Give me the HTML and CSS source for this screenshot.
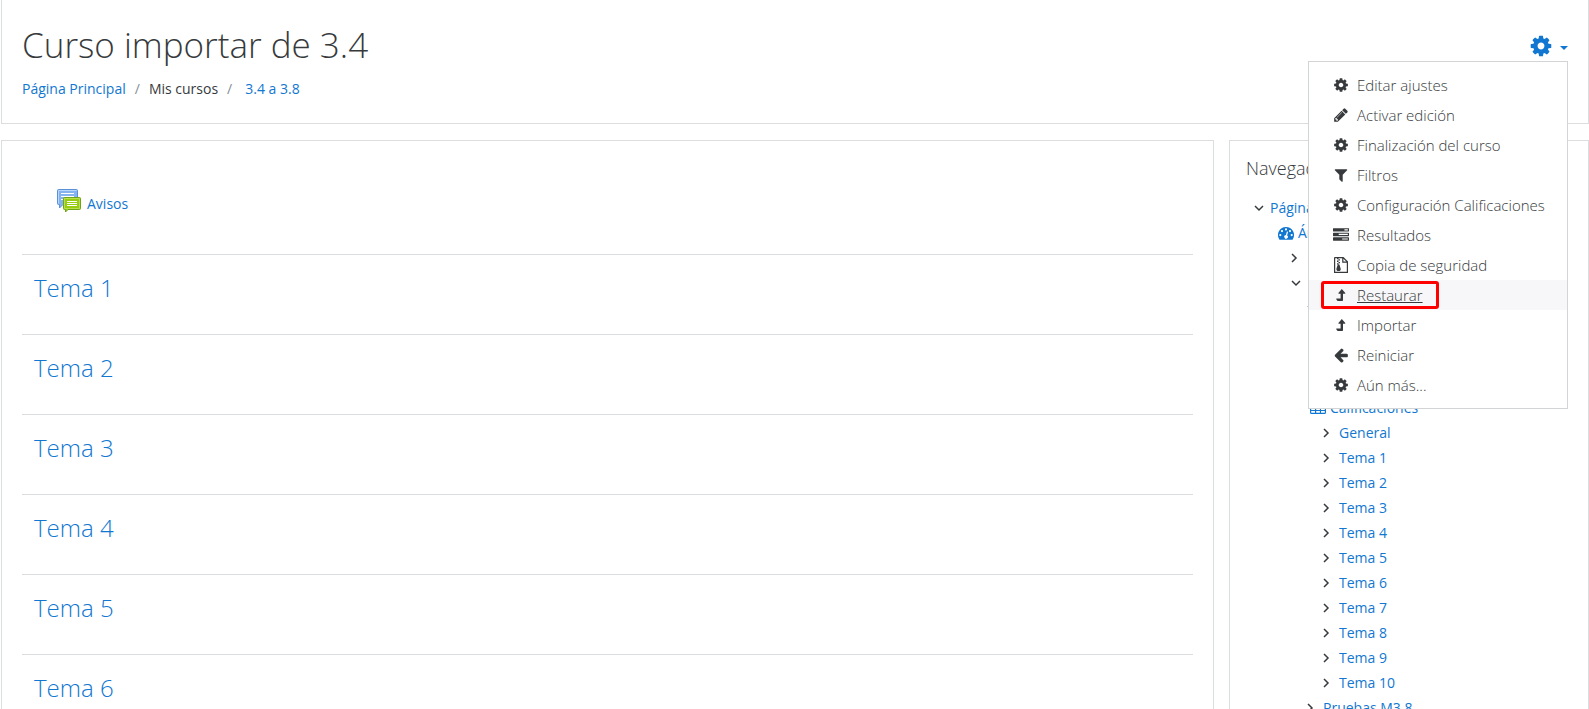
FILE: index.html
```html
<!DOCTYPE html>
<html lang="es">
<head>
    <meta charset="UTF-8">
    <meta name="viewport" content="width=device-width, initial-scale=1.0">
    <link rel="stylesheet" href="styles.css">
    <title>Curso importar de 3.4</title>
</head>
<body>

    <!-- Icons shared by the menu and the navigation tree -->
    <svg class="sprite" aria-hidden="true">
        <symbol id="i-cog" viewBox="0 0 1792 1792"><path d="M1152 896q0-106-75-181t-181-75-181 75-75 181 75 181 181 75 181-75 75-181zm512-109v222q0 12-8 23t-20 13l-185 28q-19 54-39 91 35 50 107 138 10 12 10 25t-9 23q-27 37-99 108t-94 71q-12 0-26-9l-138-108q-44 23-91 38-16 136-29 186-7 28-36 28h-222q-14 0-24.5-8.5t-11.5-21.5l-28-184q-49-16-90-37l-141 107q-10 9-25 9-14 0-25-11-126-114-165-168-7-10-7-23 0-12 8-23 15-21 51-66.5t54-70.5q-27-50-41-99l-183-27q-13-2-21-12.5t-8-23.5v-222q0-12 8-23t19-13l186-28q14-46 39-92-40-57-107-138-10-12-10-24 0-10 9-23 26-36 98.5-107.5t94.5-71.5q13 0 26 10l138 107q44-23 91-38 16-136 29-186 7-28 36-28h222q14 0 24.5 8.5t11.5 21.5l28 184q49 16 90 37l142-107q9-9 24-9 13 0 25 10 129 119 165 170 7 8 7 22 0 12-8 23-15 21-51 66.5t-54 70.5q26 50 41 98l183 28q13 2 21 12.5t8 23.5z"/></symbol>
        <symbol id="i-pencil" viewBox="0 0 1792 1792"><path d="M491 1536l91-91-235-235-91 91v107h128v128h107zm523-928q0-22-22-22-10 0-17 7l-542 542q-7 7-7 17 0 22 22 22 10 0 17-7l542-542q7-7 7-17zm-54-192l416 416-832 832h-416v-416zm683 96q0 53-37 90l-166 166-416-416 166-165q36-38 90-38 53 0 91 38l235 234q37 39 37 91z"/></symbol>
        <symbol id="i-filter" viewBox="0 0 1792 1792"><path d="M1595 295q17 41-14 70l-493 493v742q0 42-39 59-13 5-25 5-27 0-45-19l-256-256q-19-19-19-45v-486l-493-493q-31-29-14-70 17-39 59-39h1280q42 0 59 39z"/></symbol>
        <symbol id="i-tasks" viewBox="0 0 1792 1792"><path d="M1024 1408h640v-128h-640v128zm-384-512h1024v-128h-1024v128zm640-512h384v-128h-384v128zm512 832v256q0 26-19 45t-45 19h-1664q-26 0-45-19t-19-45v-256q0-26 19-45t45-19h1664q26 0 45 19t19 45zm0-512v256q0 26-19 45t-45 19h-1664q-26 0-45-19t-19-45v-256q0-26 19-45t45-19h1664q26 0 45 19t19 45zm0-512v256q0 26-19 45t-45 19h-1664q-26 0-45-19t-19-45v-256q0-26 19-45t45-19h1664q26 0 45 19t19 45z"/></symbol>
        <symbol id="i-zip" viewBox="0 0 16 16"><path fill-rule="evenodd" d="M2 0h8.500L15 4.500V16H1V1q0-1 1-1zM2.200 1.200v13.600h11.600V5.800H9.200V1.200zM10.400 1.700v2.900h2.900z"/><path d="M4 1h1.500v1.300H4zM5.500 2.300H7v1.300H5.500zM4 3.600h1.500v1.300H4zM5.500 4.900H7v1.300H5.500zM4 6.200h1.500v1.300H4zM4.800 7.500h1.600l1.300 4.200q.300 2.300-2.100 2.300t-2.200-2.300z"/></symbol>
        <symbol id="i-up" viewBox="0 0 16 16"><path d="M8.800 2l3.500 4q.300.800-.600.800H10V13.200q0 .800-.800.800H4.600L3.200 12.200q-.200-.600.400-.6h4V6.800H6q-.900 0-.6-.8z"/></symbol>
        <symbol id="i-left" viewBox="0 0 1792 1792"><path d="M1664 896v128q0 53-32.500 90.500t-84.500 37.500h-704l293 294q38 36 38 90t-38 90l-75 76q-37 37-90 37-52 0-91-37l-651-652q-37-37-37-90 0-52 37-91l651-650q38-38 91-38 52 0 90 38l75 74q38 38 38 91t-38 91l-293 293h704q52 0 84.500 37.500t32.500 90.500z"/></symbol>
        <symbol id="i-dash" viewBox="0 0 16 16"><path fill-rule="evenodd" d="M8 2a8 8 0 0 1 6.800 12.200q-.300.500-.800.500H2q-.500 0-.800-.500A8 8 0 0 1 8 2zM2.300 9a1.100 1.100 0 1 0 0 2.200 1.100 1.100 0 0 0 0-2.200zM4 5a1.100 1.100 0 1 0 0 2.200A1.100 1.100 0 0 0 4 5zM8 3.300a1.100 1.100 0 1 0 0 2.200 1.100 1.100 0 0 0 0-2.200zM12 5a1.100 1.100 0 1 0 0 2.200A1.100 1.100 0 0 0 12 5zM13.700 9a1.100 1.100 0 1 0 0 2.200 1.100 1.100 0 0 0 0-2.200zM8.900 6.400l-1 3.700a1.800 1.800 0 1 0 1.200.3l1-3.700z"/></symbol>
        <symbol id="i-table" viewBox="0 0 16 16"><path fill-rule="evenodd" d="M1.500 2h13q1.500 0 1.500 1.500v9q0 1.500-1.500 1.500h-13Q0 14 0 12.500v-9Q0 2 1.500 2zM1.200 5v2.200h3.800V5zM6.200 5v2.200h3.700V5zM11 5v2.200h3.800V5zM1.200 8.200v1.900h3.800V8.200zM6.200 8.200v1.900h3.700V8.200zM11 8.200v1.900h3.800V8.200zM1.200 11.100v1.700h3.800v-1.700zM6.200 11.100v1.700h3.700v-1.700zM11 11.100v1.700h3.800v-1.700z"/></symbol>
        <symbol id="i-right" viewBox="0 0 16 16"><path class="line" d="M6 4l4 4-4 4"/></symbol>
        <symbol id="i-down" viewBox="0 0 16 16"><path class="line" d="M6 6l4 4 4-4"/></symbol>
    </svg>

    <header class="card page-header">
        <div>
            <h1>Curso importar de 3.4</h1>
            <nav class="breadcrumb">
                <a href="#">Página Principal</a>
                <span class="sep">/</span>
                <span>Mis cursos</span>
                <span class="sep">/</span>
                <a href="#" class="last">3.4 a 3.8</a>
            </nav>
        </div>

        <div class="settings">
            <button type="button" class="toggle" aria-label="Acciones" aria-expanded="true">
                <svg class="gear"><use href="#i-cog"/></svg>
                <span class="caret"></span>
            </button>
            <div class="menu">
                <a href="#"><svg class="icon"><use href="#i-cog"/></svg>Editar ajustes</a>
                <a href="#"><svg class="icon"><use href="#i-pencil"/></svg>Activar edición</a>
                <a href="#"><svg class="icon"><use href="#i-cog"/></svg>Finalización del curso</a>
                <a href="#"><svg class="icon"><use href="#i-filter"/></svg>Filtros</a>
                <a href="#"><svg class="icon"><use href="#i-cog"/></svg>Configuración Calificaciones</a>
                <a href="#"><svg class="icon"><use href="#i-tasks"/></svg>Resultados</a>
                <a href="#"><svg class="icon"><use href="#i-zip"/></svg>Copia de seguridad</a>
                <a href="#" class="active"><svg class="icon"><use href="#i-up"/></svg><span>Restaurar</span></a>
                <a href="#"><svg class="icon"><use href="#i-up"/></svg>Importar</a>
                <a href="#"><svg class="icon"><use href="#i-left"/></svg>Reiniciar</a>
                <a href="#"><svg class="icon"><use href="#i-cog"/></svg>Aún más...</a>
            </div>
        </div>
    </header>

    <div class="columns">
        <main class="card course">
            <div class="activity">
                <svg class="forum" viewBox="0 0 24 24">
                    <path d="M1.500.500h18q1 0 1 1v13q0 1-1 1H6l-3.500 3.500v-3.500h-1q-1 0-1-1v-13q0-1 1-1z" fill="#84b3f0" stroke="#5b8fd6"/>
                    <path d="M1.500 14.500v-13h18" fill="none" stroke="#b9d6fb"/>
                    <path d="M4 4.500h13M4 7.500h13M4 10.500h4" stroke="#fff"/>
                    <path d="M7.500 8.500h15q1 0 1 1v10q0 1-1 1H11l-2.500 2.500v-2.500h-1q-1 0-1-1v-10q0-1 1-1z" fill="#98cc10" stroke="#6da41c"/>
                    <path d="M7.500 19.500v-10h15v10z" fill="none" stroke="#b9e04a"/>
                    <path d="M10 12.500h10M10 14.500h10M10 16.500h10" stroke="#fff"/>
                </svg>
                <a href="#">Avisos</a>
            </div>
            <section><h3><a href="#">Tema 1</a></h3></section>
            <section><h3><a href="#">Tema 2</a></h3></section>
            <section><h3><a href="#">Tema 3</a></h3></section>
            <section><h3><a href="#">Tema 4</a></h3></section>
            <section><h3><a href="#">Tema 5</a></h3></section>
            <section><h3><a href="#">Tema 6</a></h3></section>
        </main>

        <aside class="card sidebar">
            <h5>Navegación</h5>
            <ul class="tree">
                <li>
                    <p><svg class="arrow"><use href="#i-down"/></svg><a href="#">Página Principal</a></p>
                    <ul>
                        <li><p><svg class="leaf"><use href="#i-dash"/></svg><a href="#">Área personal</a></p></li>
                        <li><p class="branch"><svg class="arrow"><use href="#i-right"/></svg><a href="#">Páginas del sitio</a></p></li>
                        <li>
                            <p class="branch"><svg class="arrow"><use href="#i-down"/></svg><a href="#">Mis cursos</a></p>
                            <ul>
                                <li>
                                    <p class="branch"><svg class="arrow"><use href="#i-down"/></svg><a href="#">3.4 a 3.8</a></p>
                                    <ul>
                                        <li><p><a href="#">Participantes</a></p></li>
                                        <li><p><a href="#">Insignias</a></p></li>
                                        <li><p><a href="#">Competencias</a></p></li>
                                        <li><p><svg class="leaf"><use href="#i-table"/></svg><a href="#">Calificaciones</a></p></li>
                                        <li><p class="branch"><svg class="arrow"><use href="#i-right"/></svg><a href="#">General</a></p></li>
                                        <li><p class="branch"><svg class="arrow"><use href="#i-right"/></svg><a href="#">Tema 1</a></p></li>
                                        <li><p class="branch"><svg class="arrow"><use href="#i-right"/></svg><a href="#">Tema 2</a></p></li>
                                        <li><p class="branch"><svg class="arrow"><use href="#i-right"/></svg><a href="#">Tema 3</a></p></li>
                                        <li><p class="branch"><svg class="arrow"><use href="#i-right"/></svg><a href="#">Tema 4</a></p></li>
                                        <li><p class="branch"><svg class="arrow"><use href="#i-right"/></svg><a href="#">Tema 5</a></p></li>
                                        <li><p class="branch"><svg class="arrow"><use href="#i-right"/></svg><a href="#">Tema 6</a></p></li>
                                        <li><p class="branch"><svg class="arrow"><use href="#i-right"/></svg><a href="#">Tema 7</a></p></li>
                                        <li><p class="branch"><svg class="arrow"><use href="#i-right"/></svg><a href="#">Tema 8</a></p></li>
                                        <li><p class="branch"><svg class="arrow"><use href="#i-right"/></svg><a href="#">Tema 9</a></p></li>
                                        <li><p class="branch"><svg class="arrow"><use href="#i-right"/></svg><a href="#">Tema 10</a></p></li>
                                    </ul>
                                </li>
                                <li><p class="branch"><svg class="arrow"><use href="#i-right"/></svg><a href="#">Pruebas M3.8</a></p></li>
                            </ul>
                        </li>
                    </ul>
                </li>
            </ul>
        </aside>
    </div>

</body>
</html>
```
FILE: styles.css
```css
*, *::after {
    box-sizing: border-box;
}

html {
    overflow: hidden;
}

body {
    margin: 0;
    padding-left: 1px;
    height: 100vh;
    overflow: hidden;
    background-color: #fff;
    color: #373a3c;
    font-family: "Segoe UI", "Open Sans", sans-serif;
    font-size: 14px;
    line-height: 24px;
}

a {
    color: #1177d1;
    text-decoration: none;
}

h1, h3, h5, p, ul {
    margin: 0;
    padding: 0;
    font-weight: 300;
}

ul {
    list-style: none;
}

svg {
    flex: none;
    fill: currentColor;
}

.sprite {
    display: none;
}

.line {
    fill: none;
    stroke: currentColor;
    stroke-width: 1.5;
}

.card {
    border: 1px solid #dcdddf;
    background-color: #fff;
}

/* Header */
.page-header {
    display: flex;
    justify-content: space-between;
    border-top: 0;
    padding: 23px 20px 22px;
}

h1 {
    font-size: 35px;
    line-height: 44px;
}

.breadcrumb {
    display: flex;
    gap: 9px;
    margin-top: 10px;
}

.sep {
    color: #868e96;
}

.last {
    margin-left: 4px;
}

.settings {
    position: relative;
    height: 38px;
}

.toggle {
    display: flex;
    align-items: center;
    gap: 7px;
    height: 38px;
    margin-top: 4px;
    padding: 0;
    border: 0;
    background: none;
    color: #1177d1;
    cursor: pointer;
}

.gear {
    width: 24px;
    height: 24px;
}

.caret {
    border: 4px solid transparent;
    border-top-color: currentColor;
    border-bottom: 0;
    margin-top: 4px;
}

/* Dropdown menu */
.menu {
    position: absolute;
    top: 38px;
    right: 0;
    z-index: 10;
    width: 260px;
    padding: 8px 0;
    border: 1px solid #d3d4d6;
    background-color: #fff;
}

.menu a {
    display: flex;
    align-items: center;
    gap: 8px;
    height: 30px;
    padding-left: 24px;
    color: #373a3c;
    font-size: 15px;
    font-weight: 300;
}

.menu .active {
    position: relative;
    background-color: #f7f7f9;
    text-decoration: underline;
}

/* Red frame round the highlighted entry */
.menu .active::after {
    content: "";
    position: absolute;
    left: 12px;
    top: 1px;
    width: 118px;
    height: 28px;
    border: 3px solid #f00;
    border-radius: 3px;
}

.icon {
    width: 16px;
    height: 16px;
}

/* Columns */
.columns {
    display: grid;
    grid-template-columns: minmax(0, 1fr) 360px;
    gap: 15px;
    margin-top: 16px;
}

.course {
    padding: 0 20px;
}

.activity {
    display: flex;
    gap: 6px;
    height: 113px;
    padding: 48px 0 0 35px;
}

.activity a {
    margin-top: 3px;
}

.forum {
    width: 24px;
    height: 24px;
}

.course section {
    height: 80px;
    padding: 17px 12px;
    border-top: 1px solid #dcdddf;
}

h3 {
    font-size: 24px;
    line-height: 32px;
}

/* Navigation tree */
.sidebar {
    padding: 15px 16px;
}

h5 {
    font-size: 18px;
    line-height: 24px;
}

.tree {
    padding: 15px 0 0 3px;
}

.tree p {
    display: flex;
    align-items: center;
    height: 25px;
    font-weight: 400;
}

.tree .branch {
    padding-left: 8px;
}

.tree ul {
    padding-left: 16px;
}

.tree > li > ul {
    padding-left: 29px;
}

.arrow {
    width: 16px;
    height: 16px;
    margin-right: 5px;
}

.leaf {
    width: 16px;
    height: 16px;
    margin-right: 4px;
    color: #1177d1;
}
```
